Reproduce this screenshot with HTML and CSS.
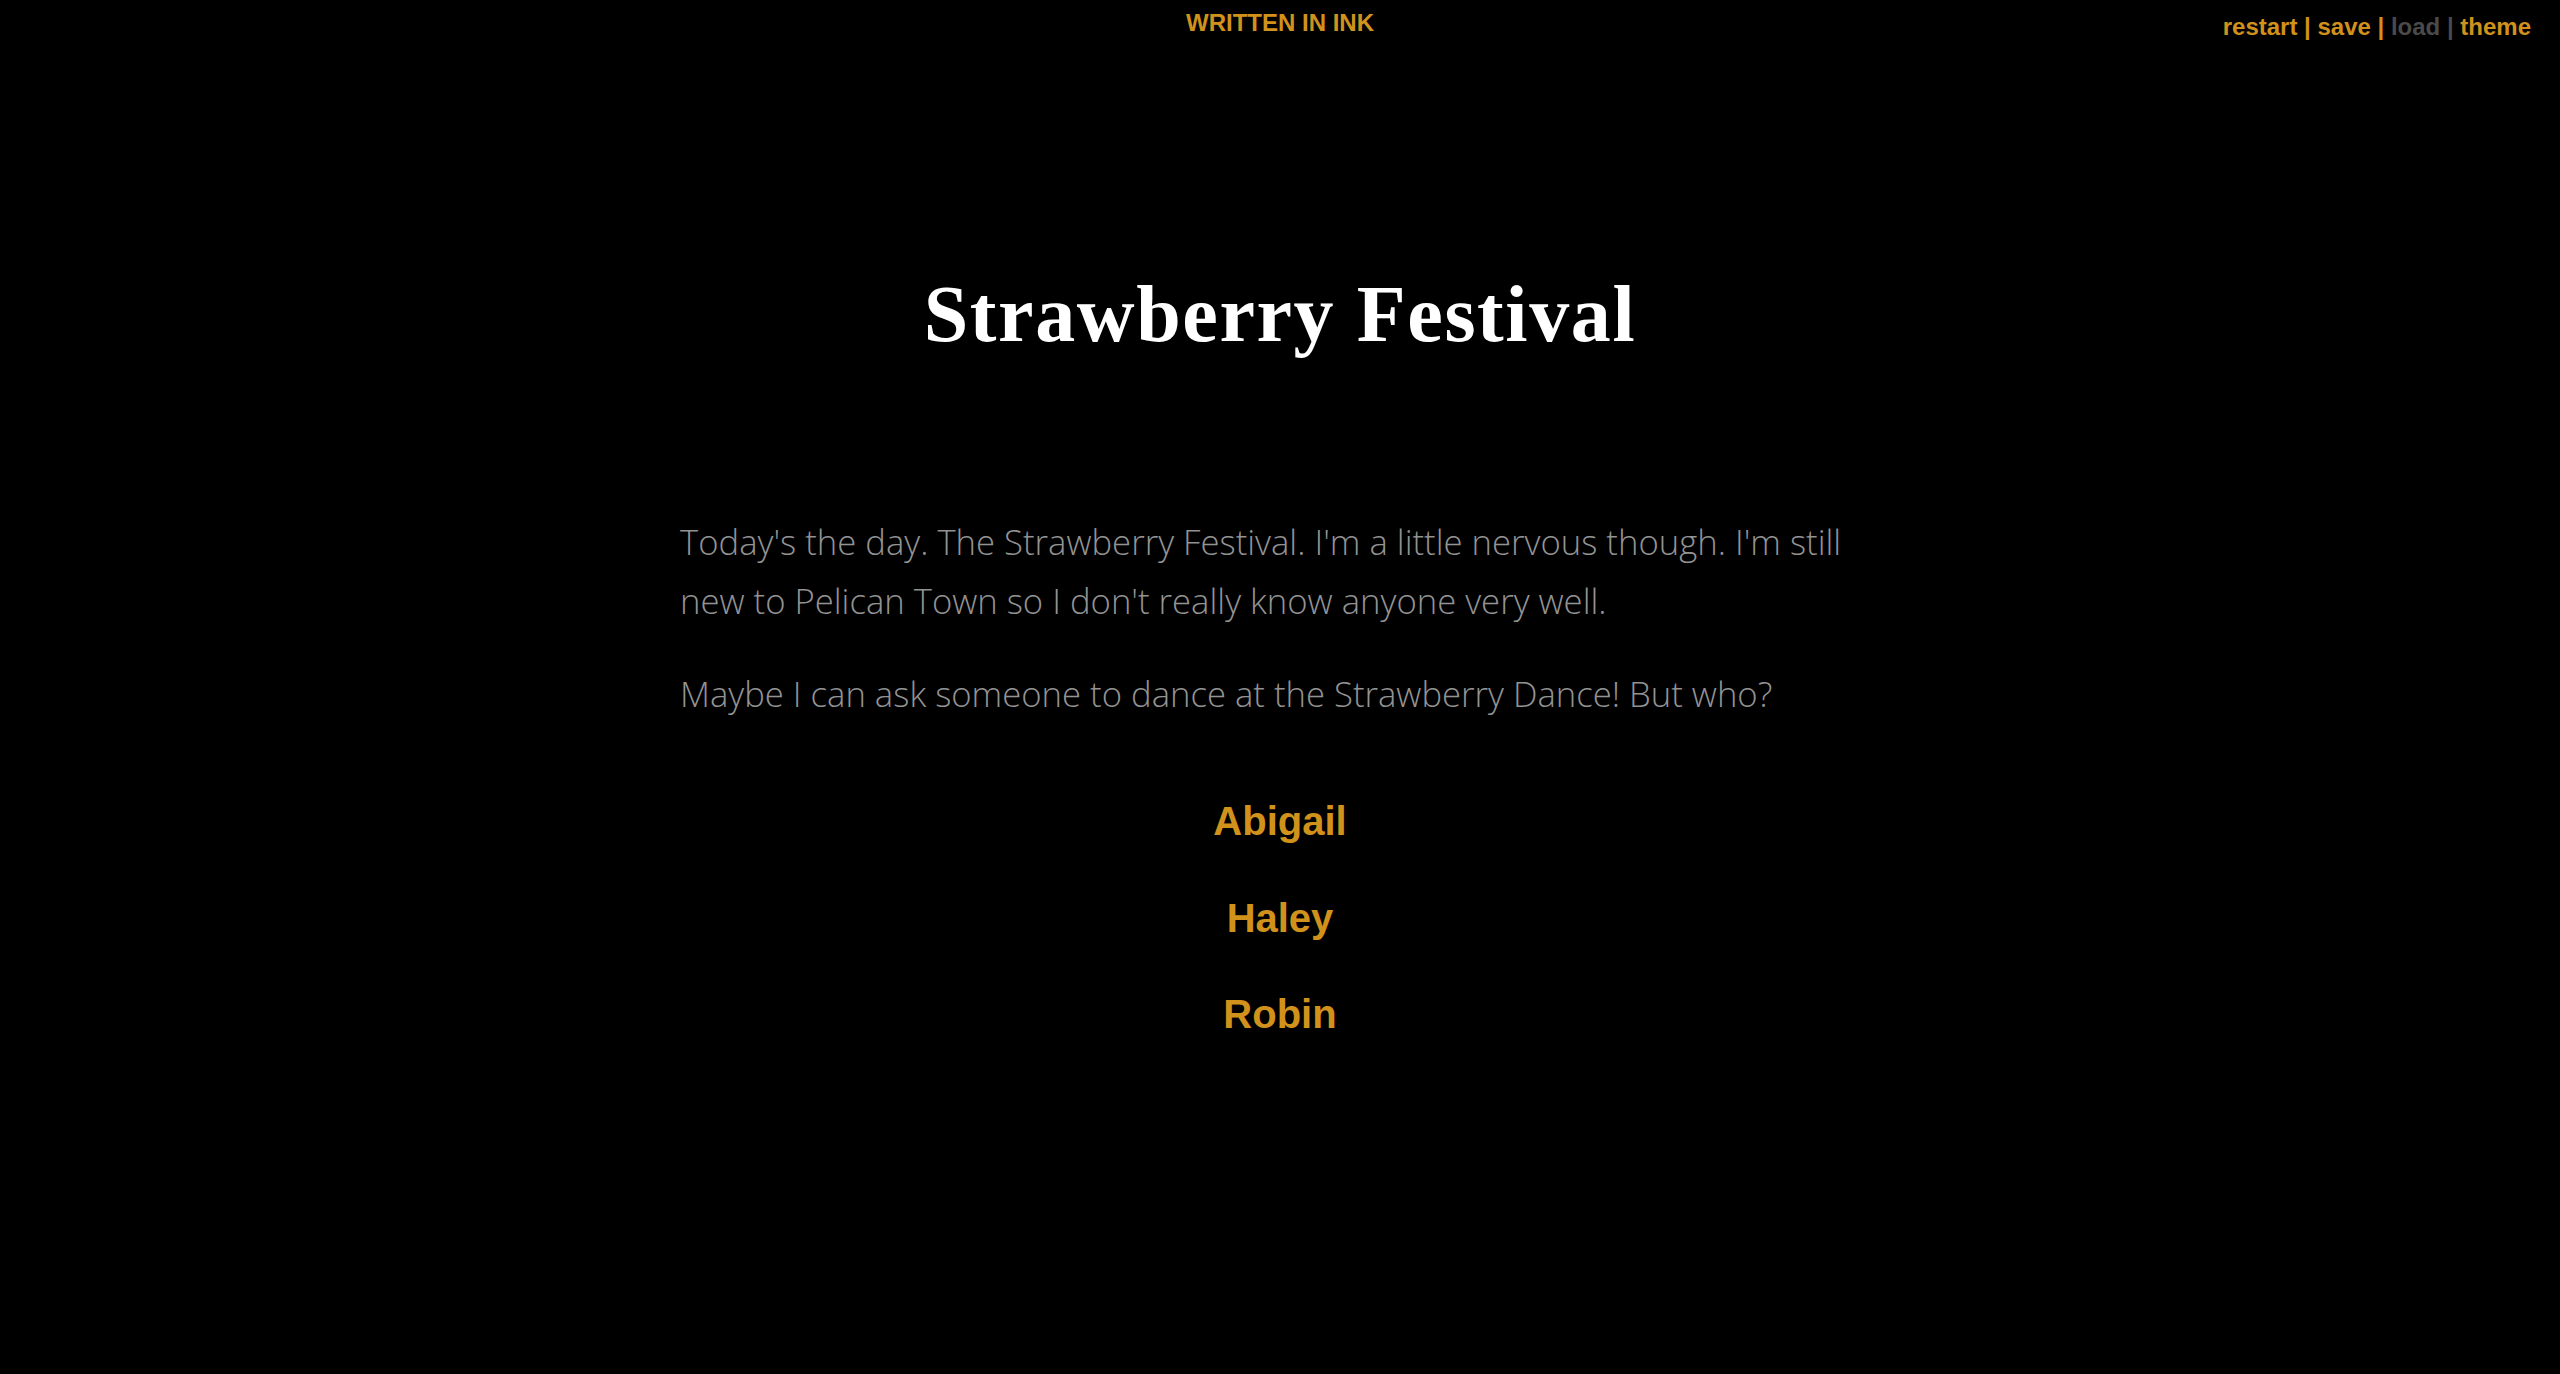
FILE: index.html
```html
<!DOCTYPE html>
<html lang="en">
<head>
<meta charset="utf-8">
<title>Strawberry Festival</title>
<link rel="stylesheet" href="styles.css">
</head>
<body>
  <div class="ink-bar">WRITTEN IN INK</div>
  <div class="controls">
    <span class="ctl">restart |</span>
    <span class="ctl">save |</span>
    <span class="ctl disabled">load |</span>
    <span class="ctl">theme</span>
  </div>
  <main class="story">
    <h1 class="title">Strawberry Festival</h1>
    <p class="text">Today's the day. The Strawberry Festival. I'm a little nervous though. I'm still new to Pelican Town so I don't really know anyone very well.</p>
    <p class="text">Maybe I can ask someone to dance at the Strawberry Dance! But who?</p>
    <div class="choices">
      <a class="choice">Abigail</a>
      <a class="choice">Haley</a>
      <a class="choice">Robin</a>
    </div>
  </main>
</body>
</html>
```
FILE: styles.css
```css
html, body {
  margin: 0;
  padding: 0;
  background: #000;
  height: 100%;
  overflow: hidden;
}

body {
  font-family: "Open Sans", "Liberation Sans", sans-serif;
  font-weight: 300;
}

.ink-bar {
  font-family: "Liberation Sans", Arial, sans-serif;
  font-weight: 700;
  font-size: 24px;
  line-height: 28px;
  padding-top: 9px;
  height: 28px;
  text-align: center;
  color: #d1921c;
}

.controls {
  position: absolute;
  top: 13px;
  right: 29px;
  font-family: "Liberation Sans", Arial, sans-serif;
  font-weight: 700;
  font-size: 24px;
  line-height: 28px;
  color: #d1921c;
  white-space: nowrap;
}

.ctl.disabled {
  color: #4a4a4a;
}

.story {
  width: 1200px;
  margin: 0 auto;
  padding-top: 232px;
}

.title {
  margin: 0 0 154px;
  font-family: "Liberation Serif", "Times New Roman", serif;
  font-weight: 700;
  font-size: 80px;
  line-height: 90px;
  letter-spacing: 1.6px;
  text-align: center;
  color: #fff;
}

.text {
  margin: 0 0 34.67px;
  font-size: 34.67px;
  line-height: 58.9px;
  color: #939393;
  font-weight: 300;
}

.choices {
  margin-top: 67px;
  display: flex;
  flex-direction: column;
  align-items: center;
  gap: 36.5px;
}

.choice {
  font-family: "Liberation Sans", Arial, sans-serif;
  font-weight: 700;
  font-size: 40px;
  line-height: 60px;
  color: #d1921c;
  text-decoration: none;
}
```
